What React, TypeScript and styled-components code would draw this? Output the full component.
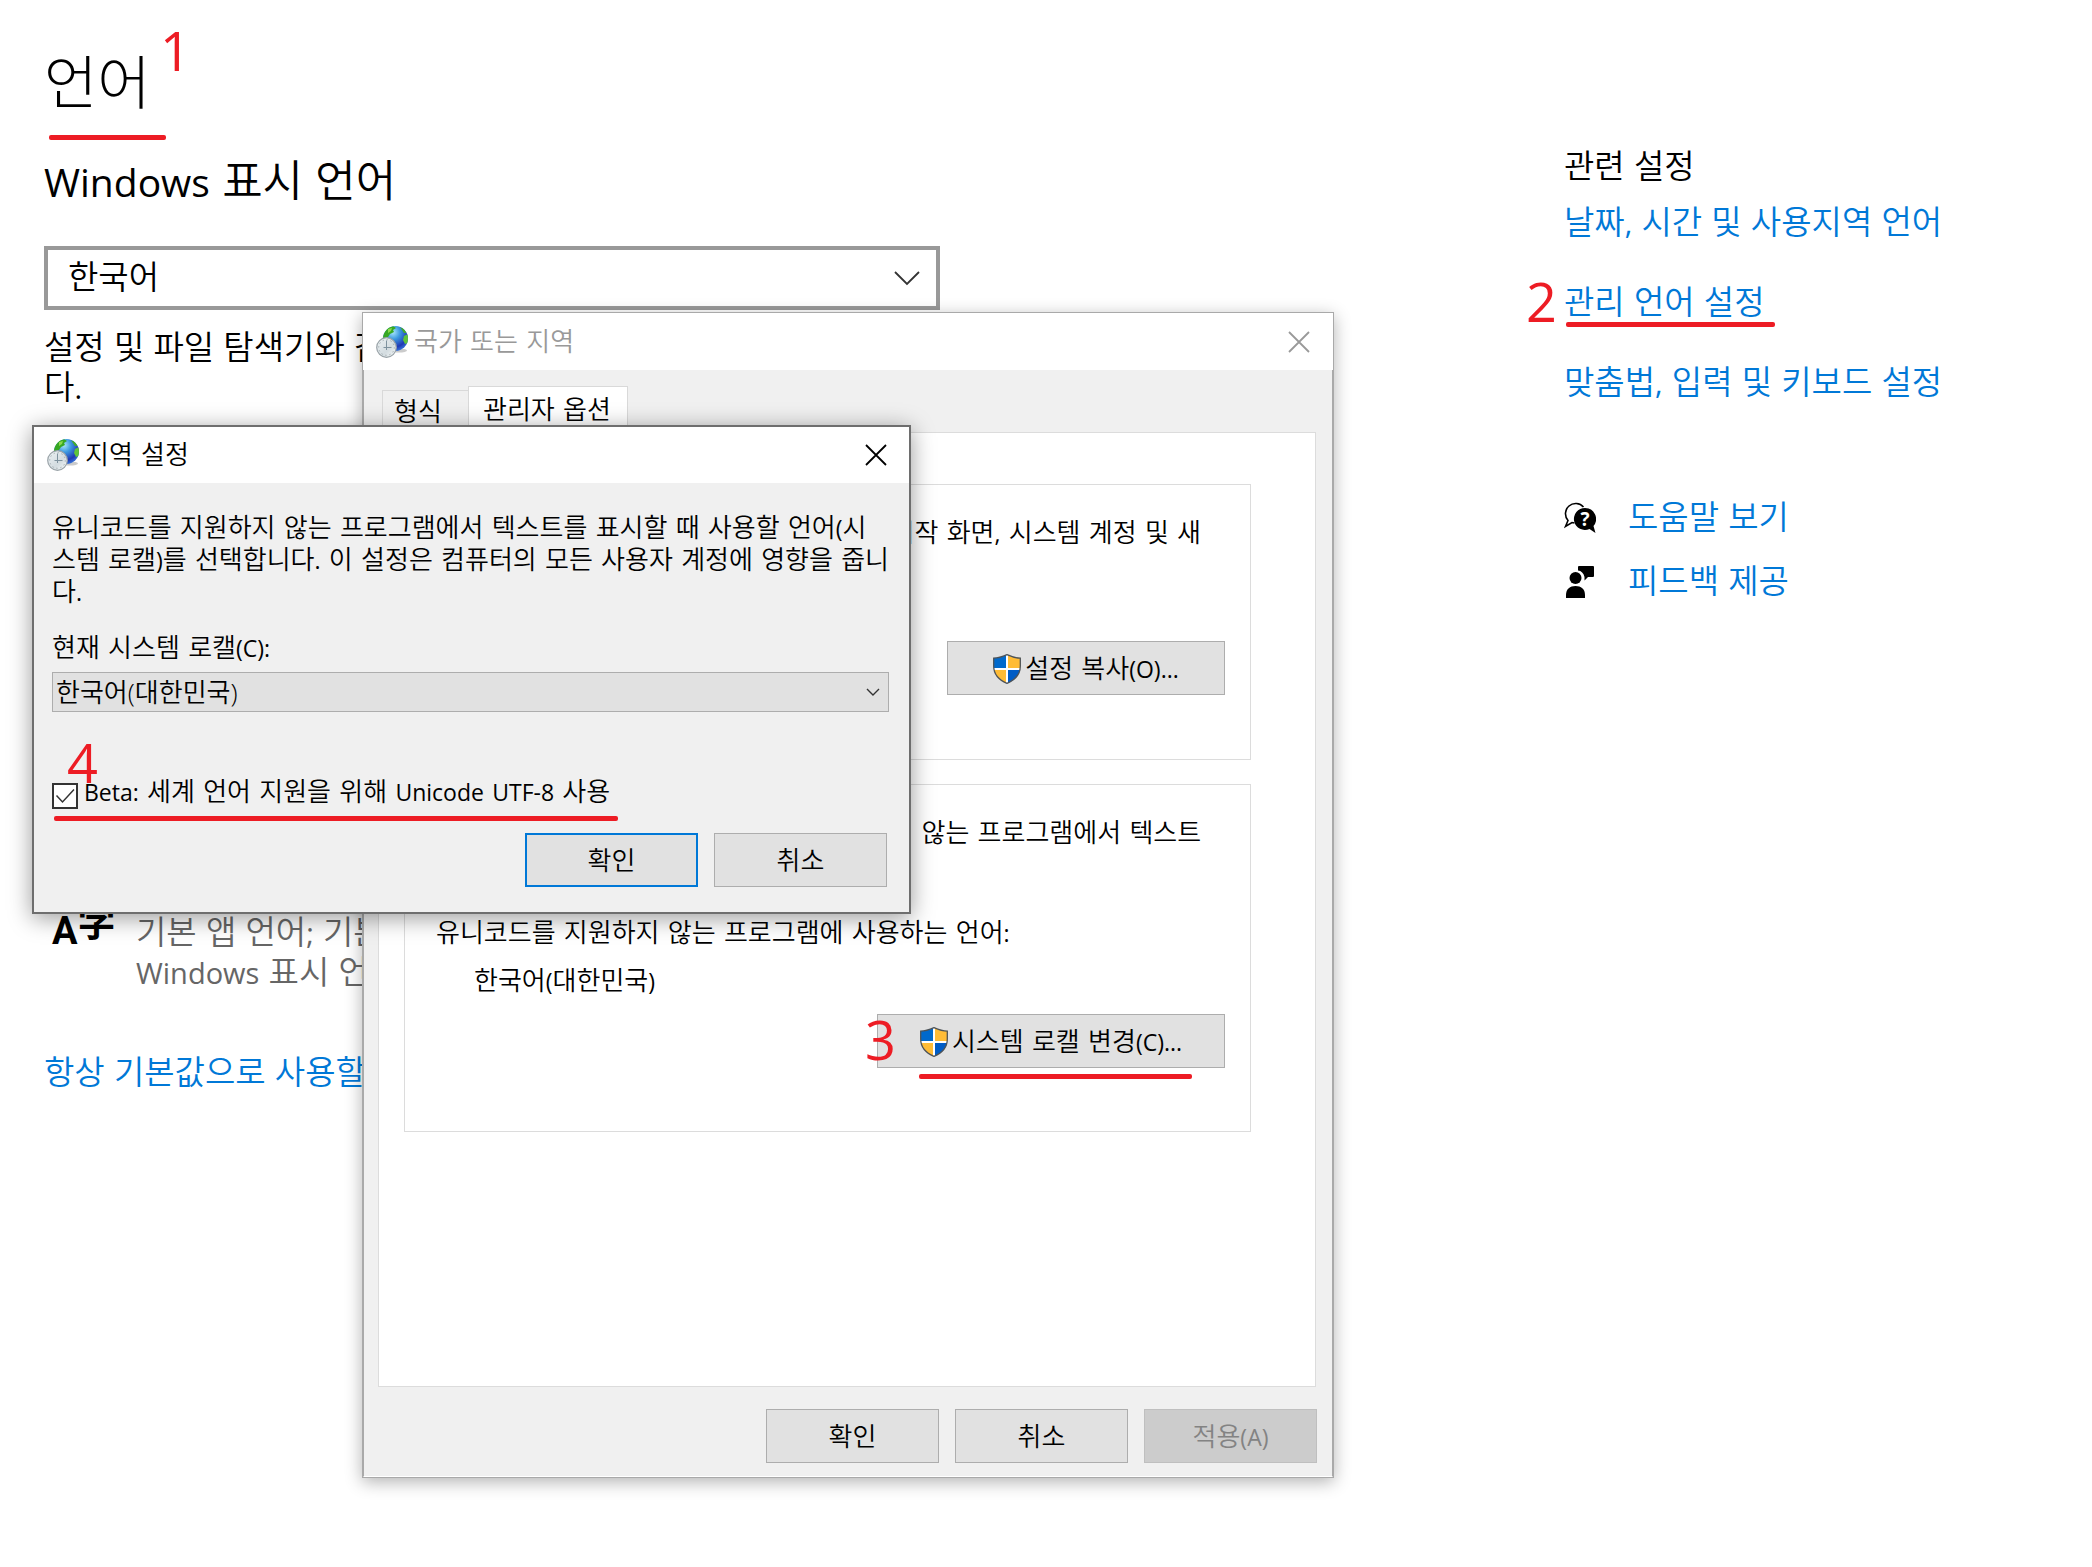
import React from "react";
import styled, { createGlobalStyle, css } from "styled-components";

const GlobalStyle = createGlobalStyle`
  *, *::before, *::after { box-sizing: border-box; }
  body {
    margin: 0;
    background: #fff;
    color: #000;
    font-family: "Liberation Sans", "Noto Sans CJK KR", sans-serif;
    font-size: 26px;
    font-weight: 350;
    line-height: 32px;
  }
  h1, h2, h3, p { margin: 0; font-weight: inherit; }
  button, select, input { font: inherit; color: inherit; margin: 0; }
`;

const RED = "#ed1c24";
const LINK = "#0078d7";

/* ---------- text ---------- */

const Latin = styled.span<{ $size: number }>`
  font-family: "Open Sans", sans-serif;
  font-size: ${(p) => p.$size}px;
  font-weight: 400;
  line-height: 1;
`;

/* Latin letters and punctuation run smaller than the Hangul beside them. */
const Text = ({ children, latin = 23 }: { children: string; latin?: number }) => (
  <span>
    {children.split(/([!-~]+)/).map((part, i) =>
      i % 2 ? (
        <Latin key={i} $size={latin}>
          {part}
        </Latin>
      ) : (
        part
      )
    )}
  </span>
);

/* ---------- settings page ---------- */

const Page = styled.div`
  position: relative;
  display: grid;
  grid-template-columns: minmax(0, 1fr) 528px;
  min-height: 100vh;
  overflow: hidden;
  font-size: 33px;
  line-height: 40px;
`;

const Main = styled.main`
  padding: 44px 44px 80px;
`;

const Title = styled.h1`
  && { font-weight: 300; }
  font-size: 58px;
  line-height: 80px;
`;

const Heading = styled.h2`
  margin-top: 30px;
  font-size: 44px;
  line-height: 56px;
`;

const SelectWrap = styled.div<{ $large?: boolean }>`
  position: relative;
  display: flex;
  align-items: center;
  ${(p) =>
    p.$large &&
    css`
      width: 896px;
      margin-top: 36px;
    `}
  svg {
    position: absolute;
    right: ${(p) => (p.$large ? 20 : 9)}px;
    pointer-events: none;
  }
`;

const Select = styled.select<{ $large?: boolean }>`
  appearance: none;
  width: 100%;
  border-radius: 0;
  ${(p) =>
    p.$large
      ? css`
          height: 64px;
          padding: 0 60px 0 20px;
          border: 4px solid #999;
          background: #fff;
        `
      : css`
          height: 40px;
          padding: 0 40px 0 3px;
          border: 1px solid #adadad;
          background: #e1e1e1;
          font-family: "Open Sans", "Noto Sans CJK KR", sans-serif;
        `}
`;

const Description = styled.p`
  margin-top: 18px;
  white-space: nowrap;
`;

const FeatureRow = styled.div`
  display: flex;
  gap: 24px;
  margin-top: 505px;
  color: #666;
  white-space: nowrap;
`;

const LanguageGlyph = styled.span`
  display: flex;
  width: 68px;
  padding-left: 8px;
  color: #000;
  font-family: Roboto, "Noto Sans CJK JP", sans-serif;
  font-weight: 700;
  font-size: 38px;
  line-height: 36px;
`;

const LanguageGlyphHan = styled.span`
  line-height: 20px;
`;

const Link = styled.a`
  color: ${LINK};
  text-decoration: none;
  white-space: nowrap;
`;

const DefaultLink = styled(Link)`
  display: block;
  margin-top: 60px;
`;

const Aside = styled.aside`
  padding-top: 147px;
`;

const AsideHeading = styled.h3`
  margin-bottom: 16px;
  font-size: 33px;
`;

const LinkList = styled.nav<{ $gap: number }>`
  display: flex;
  flex-direction: column;
  align-items: flex-start;
  gap: ${(p) => p.$gap}px;
  & + & { margin-top: 95px; }
`;

const IconLink = styled(Link)`
  display: flex;
  align-items: center;
  gap: 32px;
`;

/* ---------- dialogs ---------- */

const Dialog = styled.section<{ $active?: boolean }>`
  position: absolute;
  display: flex;
  flex-direction: column;
  background: #f0f0f0;
  font-family: "DejaVu Sans", "Noto Sans CJK KR", sans-serif;
  font-size: 26px;
  line-height: 32px;
  ${(p) =>
    p.$active
      ? css`
          left: 32px;
          top: 425px;
          width: 879px;
          border: 2px solid #6e6e6e;
          box-shadow: 0 4px 22px rgba(0, 0, 0, 0.4);
        `
      : css`
          left: 362px;
          top: 312px;
          width: 972px;
          border: 1px solid #a9a9a9;
          box-shadow: 0 4px 16px rgba(0, 0, 0, 0.3);
        `}
`;

const TitleBar = styled.header<{ $active?: boolean }>`
  display: flex;
  align-items: center;
  gap: 6px;
  height: ${(p) => (p.$active ? 56 : 57)}px;
  padding: 0 ${(p) => (p.$active ? 22 : 23)}px 0 13px;
  background: #fff;
  color: ${(p) => (p.$active ? "#000" : "#999")};
`;

const DialogTitle = styled.h2`
  flex: 1;
  font-size: 26px;
`;

const CloseButton = styled.button`
  display: flex;
  padding: 0;
  border: 0;
  background: none;
`;

const PropertyBody = styled.div`
  padding: 16px 15px 13px 14px;
  border: solid #a9a9a9;
  border-width: 0 1px 1px;
  border-bottom-color: #fff;
`;

const Tabs = styled.div`
  display: flex;
  align-items: flex-end;
  height: 46px;
  padding-left: 4px;
`;

const Tab = styled.button<{ $selected?: boolean }>`
  width: ${(p) => (p.$selected ? 160 : 87)}px;
  height: ${(p) => (p.$selected ? 46 : 42)}px;
  padding: 0 0 0 ${(p) => (p.$selected ? 14 : 11)}px;
  border: 1px solid #d9d9d9;
  border-bottom: 0;
  background: ${(p) => (p.$selected ? "#fff" : "#f0f0f0")};
  text-align: left;
  white-space: nowrap;
  & + & { margin-left: -1px; }
`;

const TabPanel = styled.div`
  display: flex;
  flex-direction: column;
  gap: 24px;
  min-height: 955px;
  margin-right: 1px;
  padding: 51px 64px 51px 25px;
  border: 1px solid #dcdcdc;
  background: #fff;
`;

const Group = styled.section<{ $height: number }>`
  display: flex;
  flex-direction: column;
  min-height: ${(p) => p.$height}px;
  padding: 32px 25px 30px 31px;
  border: 1px solid #dcdcdc;
`;

const GroupText = styled.p`
  padding-right: 24px;
  text-align: right;
  white-space: nowrap;
`;

const LocaleInfo = styled.dl`
  display: grid;
  gap: 16px;
  margin: 68px 0 0;
  dd { margin: 0 0 0 38px; }
`;

const Button = styled.button<{ $width?: number; $primary?: boolean }>`
  display: flex;
  align-items: center;
  justify-content: center;
  gap: 4px;
  width: ${(p) => p.$width ?? 173}px;
  height: 54px;
  padding: 2px 0 0;
  border: 1px solid #adadad;
  background: #e1e1e1;
  ${(p) => p.$primary && css`border: 2px solid ${LINK};`}
  &:disabled {
    border-color: #bfbfbf;
    background: #ccc;
    color: #838383;
  }
`;

const GroupButton = styled(Button)<{ $space: number }>`
  align-self: flex-end;
  margin-top: ${(p) => p.$space}px;
`;

const Actions = styled.footer<{ $space: number; $inset?: number }>`
  display: flex;
  justify-content: flex-end;
  gap: 16px;
  margin-top: ${(p) => p.$space}px;
  padding-right: ${(p) => p.$inset ?? 0}px;
`;

const LocaleBody = styled.div`
  padding: 29px 20px 25px 18px;
`;

const LocaleText = styled.p`
  white-space: nowrap;
`;

const LocaleLabel = styled.label`
  display: block;
  margin: 24px 0 8px;
`;

const CheckRow = styled.label`
  display: flex;
  gap: 6px;
  margin-top: 64px;
  white-space: nowrap;
`;

const CheckBoxWrap = styled.span`
  display: grid;
  margin-top: 7px;
  width: 26px;
  height: 26px;
  > * { grid-area: 1 / 1; }
  svg { pointer-events: none; }
`;

const CheckBox = styled.input`
  appearance: none;
  width: 26px;
  height: 26px;
  border: 2px solid #333;
  background: #fff;
`;

/* ---------- step marks ---------- */

const StepNumber = styled.span<{ $x: number; $y: number }>`
  position: absolute;
  left: ${(p) => p.$x}px;
  top: ${(p) => p.$y}px;
  color: ${RED};
  font-family: "Open Sans", sans-serif;
  font-size: 54px;
  font-weight: 400;
  line-height: 56px;
  pointer-events: none;
`;

const StepLine = styled.span<{ $x: number; $y: number; $w: number }>`
  position: absolute;
  left: ${(p) => p.$x}px;
  top: ${(p) => p.$y}px;
  width: ${(p) => p.$w}px;
  height: 5px;
  border-radius: 2px;
  background: ${RED};
  pointer-events: none;
`;

/* ---------- icons ---------- */

const Chevron = ({ size, weight }: { size: number; weight: number }) => (
  <svg width={size} height={size / 2 + 2} viewBox={`0 0 ${size} ${size / 2 + 2}`} fill="none" stroke="#333" strokeWidth={weight} aria-hidden="true">
    <path d={`M1 1 L${size / 2} ${size / 2} L${size - 1} 1`} />
  </svg>
);

const Cross = () => (
  <svg width="22" height="22" viewBox="0 0 22 22" fill="none" stroke="currentColor" strokeWidth="1.800" aria-hidden="true">
    <path d="M1 1 L21 21 M21 1 L1 21" />
  </svg>
);

const Check = () => (
  <svg width="26" height="26" viewBox="0 0 26 26" fill="none" stroke="#333" strokeWidth="1.500" aria-hidden="true">
    <path d="M4.500 12.500 L10.500 19 L22 6.500" />
  </svg>
);

const RegionIcon = ({ id }: { id: string }) => (
  <svg width="32" height="32" viewBox="0 0 32 32" aria-hidden="true">
    <defs>
      <radialGradient id={`${id}-sea`} cx="0.4" cy="0.25" r="0.8">
        <stop offset="0" stopColor="#a8e6fa" />
        <stop offset="0.35" stopColor="#3d9ae0" />
        <stop offset="0.75" stopColor="#2038b4" />
        <stop offset="1" stopColor="#3a7fe0" />
      </radialGradient>
      <linearGradient id={`${id}-dial`} x1="0" y1="0" x2="1" y2="1">
        <stop offset="0" stopColor="#eef3f5" />
        <stop offset="0.6" stopColor="#d3dce0" />
        <stop offset="1" stopColor="#fafcfc" />
      </linearGradient>
      <clipPath id={`${id}-clip`}>
        <circle cx="19.500" cy="12.500" r="12.500" />
      </clipPath>
    </defs>
    <ellipse cx="23" cy="24.500" rx="8" ry="2" fill="#b5b5b5" opacity="0.7" />
    <circle cx="19.500" cy="12.500" r="12.500" fill={`url(#${id}-sea)`} />
    <g clipPath={`url(#${id}-clip)`}>
      <path d="M7 12 C7 5 11 1 17 0 L20 2 L17 4 L18 6 L14 8 L12 11 L9 12 Z" fill="#37a822" />
      <path d="M12 3 L16 2 L15 5 L12 7 Z" fill="#8bd94c" />
      <path d="M24 1 L28 3 L31 7 L28 7 L26 4 Z" fill="#43ad27" />
      <path d="M28 10 L32 8 L32 17 L29 18 L27 14 Z" fill="#5fc43a" />
    </g>
    <circle cx="10.500" cy="21.500" r="9.800" fill={`url(#${id}-dial)`} stroke="#9aa3a8" strokeWidth="1.200" />
    <circle cx="10.500" cy="21.500" r="7.800" fill="none" stroke="#8c979c" strokeWidth="1" strokeDasharray="1 3.080" />
    <path d="M10.500 14.500 V24 M7.500 21.500 H15.500" fill="none" stroke="#7e929e" strokeWidth="1" />
  </svg>
);

const ShieldIcon = ({ id }: { id: string }) => (
  <svg width="28" height="30" viewBox="0 0 28 30" aria-hidden="true">
    <defs>
      <clipPath id={`${id}-shield`}>
        <path d="M14 0.500 C10 2.500 5 4 0.500 4 V12 C0.500 20.500 6 26 14 29.500 C22 26 27.500 20.500 27.500 12 V4 C23 4 18 2.500 14 0.500 Z" />
      </clipPath>
    </defs>
    <g clipPath={`url(#${id}-shield)`}>
      <rect width="28" height="30" fill="#fff" />
      <rect width="13" height="14" fill="#0069cc" />
      <rect x="15" width="13" height="14" fill="#ffbc36" />
      <rect y="16" width="13" height="14" fill="#ffbc36" />
      <rect x="15" y="16" width="13" height="14" fill="#005cc5" />
    </g>
    <path
      d="M14 0.700 C10 2.500 5 4.200 0.700 4.200 V12 C0.700 20.500 6 26 14 29.300 C22 26 27.300 20.500 27.300 12 V4.200 C23 4.200 18 2.500 14 0.700 Z"
      fill="none"
      stroke="#4d5358"
      strokeWidth="1.300"
    />
  </svg>
);

const HelpIcon = () => (
  <svg width="32" height="32" viewBox="0 0 32 32" aria-hidden="true">
    <path d="M19.500 5 A10 10 0 1 0 4 18.500 L1.500 24.500 L8 20.500 L10.500 21" fill="none" stroke="#000" strokeWidth="1.600" />
    <path d="M21 6 A11 11 0 1 0 25.500 27 L31.500 31 L29.500 24 A11 11 0 0 0 21 6 Z" fill="#000" />
    <text x="21" y="24" textAnchor="middle" fontFamily="Open Sans, sans-serif" fontSize="19" fontWeight="700" fill="#fff">
      ?
    </text>
  </svg>
);

const FeedbackIcon = () => (
  <svg width="32" height="32" viewBox="0 0 32 32" aria-hidden="true">
    <path d="M14 1 Q14 0 15 0 H29 Q30 0 30 1 V10 Q30 11 29 11 H24 L20.500 14.500 V11 Q19 5 14 4.500 Z" fill="#000" />
    <circle cx="11.500" cy="12" r="6" fill="#000" />
    <path d="M2 32 V29 C2 23 6 20 11.500 20 C17 20 21 23 21 29 V32 Z" fill="#000" />
  </svg>
);

/* ---------- composition ---------- */

const PropertiesDialog = () => (
  <Dialog aria-labelledby="region-title">
    <TitleBar>
      <RegionIcon id="region" />
      <DialogTitle id="region-title">국가 또는 지역</DialogTitle>
      <CloseButton aria-label="닫기">
        <Cross />
      </CloseButton>
    </TitleBar>
    <PropertyBody>
      <Tabs role="tablist">
        <Tab role="tab" aria-selected="false">형식</Tab>
        <Tab role="tab" aria-selected="true" $selected>관리자 옵션</Tab>
      </Tabs>
      <TabPanel role="tabpanel">
        <Group $height={276}>
          <GroupText>
            <Text>국가별 설정을 보고 시작 화면, 시스템 계정 및 새</Text>
          </GroupText>
          <GroupButton $width={278} $space={92}>
            <ShieldIcon id="copy" />
            <Text>설정 복사(O)...</Text>
          </GroupButton>
        </Group>
        <Group $height={348}>
          <GroupText>
            <Text>이 설정(시스템 로캘)은 유니코드를 지원하지 않는 프로그램에서 텍스트</Text>
          </GroupText>
          <LocaleInfo>
            <dt>
              <Text>유니코드를 지원하지 않는 프로그램에 사용하는 언어:</Text>
            </dt>
            <dd>
              <Text>한국어(대한민국)</Text>
            </dd>
          </LocaleInfo>
          <GroupButton $width={348} $space={17}>
            <ShieldIcon id="change" />
            <Text>시스템 로캘 변경(C)...</Text>
          </GroupButton>
        </Group>
      </TabPanel>
      <Actions $space={22}>
        <Button>확인</Button>
        <Button>취소</Button>
        <Button disabled>
          <Text>적용(A)</Text>
        </Button>
      </Actions>
    </PropertyBody>
  </Dialog>
);

const LocaleDialog = () => (
  <Dialog $active aria-labelledby="locale-title">
    <TitleBar $active>
      <RegionIcon id="locale" />
      <DialogTitle id="locale-title">지역 설정</DialogTitle>
      <CloseButton aria-label="닫기">
        <Cross />
      </CloseButton>
    </TitleBar>
    <LocaleBody>
      <LocaleText>
        <Text>유니코드를 지원하지 않는 프로그램에서 텍스트를 표시할 때 사용할 언어(시</Text>
        <br />
        <Text>스템 로캘)를 선택합니다. 이 설정은 컴퓨터의 모든 사용자 계정에 영향을 줍니</Text>
        <br />
        <Text>다.</Text>
      </LocaleText>
      <LocaleLabel htmlFor="system-locale">
        <Text>현재 시스템 로캘(C):</Text>
      </LocaleLabel>
      <SelectWrap>
        <Select id="system-locale">
          <option>한국어(대한민국)</option>
        </Select>
        <Chevron size={14} weight={1.4} />
      </SelectWrap>
      <CheckRow>
        <CheckBoxWrap>
          <CheckBox type="checkbox" defaultChecked />
          <Check />
        </CheckBoxWrap>
        <Text>Beta: 세계 언어 지원을 위해 Unicode UTF-8 사용</Text>
      </CheckRow>
      <Actions $space={24} $inset={2}>
        <Button $primary>확인</Button>
        <Button>취소</Button>
      </Actions>
    </LocaleBody>
  </Dialog>
);

export default function App() {
  return (
    <>
      <GlobalStyle />
      <Page>
        <Main>
          <Title>언어</Title>
          <Heading id="display-language">
            <Text latin={39}>Windows 표시 언어</Text>
          </Heading>
          <SelectWrap $large>
            <Select $large aria-labelledby="display-language">
              <option>한국어</option>
            </Select>
            <Chevron size={26} weight={1.8} />
          </SelectWrap>
          <Description>
            <Text latin={29}>설정 및 파일 탐색기와 같은 Windows 기능이 이 언어로 표시됩니</Text>
            <br />
            <Text latin={29}>다.</Text>
          </Description>
          <FeatureRow>
            <LanguageGlyph>
              A<LanguageGlyphHan>字</LanguageGlyphHan>
            </LanguageGlyph>
            <p>
              <Text latin={29}>기본 앱 언어; 기본 입력 언어;</Text>
              <br />
              <Text latin={29}>Windows 표시 언어</Text>
            </p>
          </FeatureRow>
          <DefaultLink href="#input">항상 기본값으로 사용할 입력기 선택</DefaultLink>
        </Main>
        <Aside>
          <AsideHeading>관련 설정</AsideHeading>
          <LinkList $gap={40}>
            <Link href="#date">
              <Text latin={29}>날짜, 시간 및 사용지역 언어</Text>
            </Link>
            <Link href="#admin">관리 언어 설정</Link>
            <Link href="#typing">
              <Text latin={29}>맞춤법, 입력 및 키보드 설정</Text>
            </Link>
          </LinkList>
          <LinkList $gap={24}>
            <IconLink href="#help">
              <HelpIcon />
              도움말 보기
            </IconLink>
            <IconLink href="#feedback">
              <FeedbackIcon />
              피드백 제공
            </IconLink>
          </LinkList>
        </Aside>

        <PropertiesDialog />
        <LocaleDialog />

        <StepNumber $x={160} $y={22}>1</StepNumber>
        <StepLine $x={49} $y={135} $w={117} />
        <StepNumber $x={1526} $y={273}>2</StepNumber>
        <StepLine $x={1566} $y={322} $w={209} />
        <StepNumber $x={865} $y={1011}>3</StepNumber>
        <StepLine $x={919} $y={1074} $w={273} />
        <StepNumber $x={67} $y={734}>4</StepNumber>
        <StepLine $x={54} $y={816} $w={564} />
      </Page>
    </>
  );
}
